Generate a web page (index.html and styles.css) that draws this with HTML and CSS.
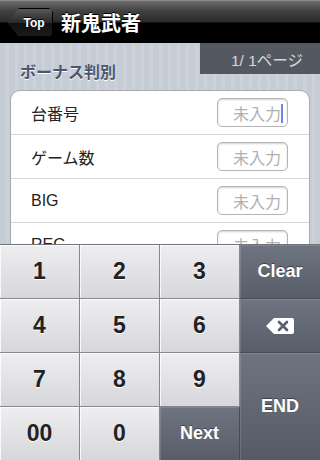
FILE: index.html
```html
<!DOCTYPE html>
<html lang="ja">
<head>
<meta charset="utf-8">
<title>新鬼武者</title>
<link rel="stylesheet" href="styles.css">
</head>
<body>
<div class="screen">
  <header class="nav">
    <button class="back">Top</button>
    <h1 class="title">新鬼武者</h1>
  </header>
  <main class="content">
    <div class="pager">1/&nbsp;1ページ</div>
    <h2 class="section">ボーナス判別</h2>
    <div class="card">
      <div class="row"><span class="label">台番号</span><span class="field active">未入力<i class="caret"></i></span></div>
      <div class="row"><span class="label">ゲーム数</span><span class="field">未入力</span></div>
      <div class="row"><span class="label">BIG</span><span class="field">未入力</span></div>
      <div class="row"><span class="label">REG</span><span class="field">未入力</span></div>
    </div>
  </main>
  <div class="keyboard">
    <div class="key">1</div>
    <div class="key">2</div>
    <div class="key">3</div>
    <div class="key fn">Clear</div>
    <div class="key">4</div>
    <div class="key">5</div>
    <div class="key">6</div>
    <div class="key fn"><svg width="30" height="18" viewBox="0 0 30 18"><path d="M9 1 H27 a2 2 0 0 1 2 2 V15 a2 2 0 0 1 -2 2 H9 L1 9 Z" fill="#fff"/><path d="M14 5 L22 13 M22 5 L14 13" stroke="#5a606b" stroke-width="2.6" stroke-linecap="round"/></svg></div>
    <div class="key">7</div>
    <div class="key">8</div>
    <div class="key">9</div>
    <div class="key fn end">END</div>
    <div class="key">00</div>
    <div class="key">0</div>
    <div class="key fn">Next</div>
  </div>
</div>
</body>
</html>
```
FILE: styles.css
```css
* { box-sizing: border-box; }
html, body { margin: 0; padding: 0; }
body {
  width: 320px;
  height: 460px;
  overflow: hidden;
  font-family: "Liberation Sans", "Noto Sans CJK JP", sans-serif;
}
.screen {
  position: relative;
  width: 320px;
  height: 460px;
  overflow: hidden;
  display: flex;
  flex-direction: column;
  background: repeating-linear-gradient(90deg, #c5ccd4 0, #c5ccd4 6px, #cbd2d9 6px, #cbd2d9 9px);
}
.nav {
  height: 43px;
  flex: none;
  display: flex;
  align-items: center;
  gap: 8px;
  padding-left: 7px;
  background: linear-gradient(#6b6b6b 0, #414141 10px, #2a2a2a 21px, #000 22px, #000 100%);
  border-top: 1px solid #8a8a8a;
}
.back {
  width: 46px;
  height: 29px;
  margin-top: 1px;
  border: none;
  padding: 0 0 0 8px;
  color: #fff;
  font: bold 12px "Liberation Sans", sans-serif;
  text-shadow: 0 -1px 0 #000;
  background: linear-gradient(#5a5a5a, #2a2a2a 50%, #111 51%, #1c1c1c);
  clip-path: polygon(12px 0, calc(100% - 4px) 0, 100% 4px, 100% calc(100% - 4px), calc(100% - 4px) 100%, 12px 100%, 0 50%);
  box-shadow: inset 0 0 0 1px #000;
}
.title {
  margin: 0;
  color: #fff;
  font: bold 20px "Noto Sans CJK JP", sans-serif;
  text-shadow: 0 -1px 0 #000;
  letter-spacing: 0;
}
.content {
  position: relative;
  flex: 1;
  display: flex;
  flex-direction: column;
}
.pager {
  position: absolute;
  top: 0;
  right: 0;
  width: 120px;
  height: 31px;
  background: rgba(74, 78, 86, 0.92);
  color: #d4d6da;
  font: 15.5px "Liberation Sans", "Noto Sans CJK JP", sans-serif;
  display: flex;
  align-items: center;
  justify-content: flex-end;
  padding-right: 17px;
  padding-top: 1px;
}
.section {
  margin: 16px 0 0 20px;
  height: 31px;
  color: #4c566c;
  font: bold 16px "Noto Sans CJK JP", sans-serif;
  text-shadow: 0 1px 0 #fff;
}
.card {
  margin: 0 10px;
  background: #fff;
  border: 1px solid #a8abb0;
  border-radius: 10px;
}
.row {
  height: 44px;
  display: flex;
  align-items: center;
  justify-content: space-between;
  padding: 0 21px 0 20px;
  border-top: 1px solid #d6d6d6;
}
.row:first-child { border-top: none; height: 43px; }
.label {
  font: 16px "Liberation Sans", "Noto Sans CJK JP", sans-serif;
  color: #222;
}
.field {
  position: relative;
  width: 71px;
  height: 29px;
  border: 1px solid #b5b5b8;
  border-radius: 5px;
  box-shadow: inset 0 1px 2px rgba(0,0,0,0.18);
  color: #b0b0b0;
  font: 16px "Noto Sans CJK JP", sans-serif;
  display: flex;
  align-items: center;
  justify-content: flex-end;
  padding-right: 6px;
  background: #fff;
}
.caret {
  position: absolute;
  right: 4px;
  top: 5px;
  width: 2px;
  height: 19px;
  background: #6e84e8;
}
.keyboard {
  position: absolute;
  left: 0;
  bottom: 0;
  width: 320px;
  height: 216px;
  display: grid;
  grid-template-columns: repeat(4, 80px);
  grid-template-rows: repeat(4, 54px);
  border-top: 1px solid #6f7278;
  background: #7c7f86;
}
.key {
  display: flex;
  align-items: center;
  justify-content: center;
  background: linear-gradient(#eeeef0, #d6d7db);
  border-right: 1px solid #85878d;
  border-bottom: 1px solid #85878d;
  box-shadow: inset 1px 1px 0 rgba(255,255,255,0.8);
  color: #222;
  font: bold 23px "Liberation Sans", sans-serif;
  text-shadow: 0 1px 0 #fff;
}
.key:nth-child(4n) { border-right: none; }
.fn {
  background: linear-gradient(#6e7480, #585e69);
  color: #fff;
  font-size: 18px;
  text-shadow: 0 -1px 0 #3c4048;
  border-right: none;
  border-bottom: 1px solid #474b53;
  box-shadow: inset 1px 1px 0 rgba(255,255,255,0.12);
}
.end {
  grid-column: 4;
  grid-row: 3 / span 2;
  background: linear-gradient(#6e7480, #555b66);
}
.keyboard .key:nth-last-child(1) {
  border-right: 1px solid #474b53;
}
```
